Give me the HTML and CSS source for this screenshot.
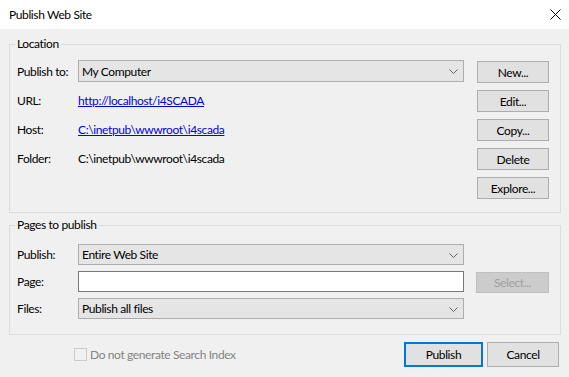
FILE: index.html
```html
<!DOCTYPE html>
<html>
<head>
<meta charset="utf-8">
<title>Publish Web Site</title>
<link rel="stylesheet" href="styles.css">
</head>
<body>
<div class="dialog">
  <div class="titlebar">
    <span class="title">Publish Web Site</span>
    <svg class="close" width="11" height="11" viewBox="0 0 11 11"><path d="M0.5 0.5 L10.5 10.5 M10.5 0.5 L0.5 10.5" stroke="#000" stroke-width="1" fill="none"/></svg>
  </div>
  <div class="content">
    <fieldset class="group group-location">
      <legend>Location</legend>
      <div class="loc">
        <div class="fields">
          <div class="row">
            <span class="label">Publish to:</span>
            <div class="combo"><span class="combo-text">My Computer</span><svg class="chev" width="9" height="5" viewBox="0 0 9 5"><path d="M0.5 0.5 L4.5 4.5 L8.5 0.5" stroke="#606060" fill="none"/></svg></div>
          </div>
          <div class="row">
            <span class="label">URL:</span>
            <a class="link" href="#">http://localhost/i4SCADA</a>
          </div>
          <div class="row">
            <span class="label">Host:</span>
            <a class="link" href="#">C:\inetpub\wwwroot\i4scada</a>
          </div>
          <div class="row">
            <span class="label">Folder:</span>
            <span class="value">C:\inetpub\wwwroot\i4scada</span>
          </div>
        </div>
        <div class="buttons">
          <button class="btn">New...</button>
          <button class="btn">Edit...</button>
          <button class="btn">Copy...</button>
          <button class="btn">Delete</button>
          <button class="btn">Explore...</button>
        </div>
      </div>
    </fieldset>
    <fieldset class="group group-pages">
      <legend>Pages to publish</legend>
      <div class="prow">
        <span class="label">Publish:</span>
        <div class="combo combo-sm"><span class="combo-text">Entire Web Site</span><svg class="chev" width="9" height="5" viewBox="0 0 9 5"><path d="M0.5 0.5 L4.5 4.5 L8.5 0.5" stroke="#606060" fill="none"/></svg></div>
      </div>
      <div class="prow">
        <span class="label">Page:</span>
        <div class="textbox"></div>
        <button class="btn btn-disabled" disabled>Select...</button>
      </div>
      <div class="prow">
        <span class="label">Files:</span>
        <div class="combo combo-sm"><span class="combo-text">Publish all files</span><svg class="chev" width="9" height="5" viewBox="0 0 9 5"><path d="M0.5 0.5 L4.5 4.5 L8.5 0.5" stroke="#606060" fill="none"/></svg></div>
      </div>
    </fieldset>
    <div class="footer">
      <label class="check"><span class="checkbox"></span><span class="check-text">Do not generate Search Index</span></label>
      <div class="actions">
        <button class="btn btn-default">Publish</button>
        <button class="btn btn-cancel">Cancel</button>
      </div>
    </div>
  </div>
</div>
</body>
</html>
```
FILE: styles.css
```css
html, body {
  margin: 0;
  padding: 0;
}
body {
  background: #f0f0f0;
  font-family: "Lato", "Noto Sans", sans-serif;
  font-size: 12px;
  letter-spacing: -0.38px;
  color: #000;
}
.dialog {
  width: 569px;
  height: 377px;
  display: flex;
  flex-direction: column;
  background: #f0f0f0;
}
.titlebar {
  height: 29px;
  background: #fff;
  display: flex;
  align-items: center;
  justify-content: space-between;
  padding: 0 8px 0 9px;
  box-sizing: border-box;
}
.title {
  line-height: 16px;
}
.close {
  display: block;
}
.content {
  padding: 7px 8px 0 9px;
}
.group {
  margin: 0;
  border: 1px solid #dcdcdc;
  min-inline-size: 0;
}
.group legend {
  padding: 0 2px;
  margin-left: -2px;
  line-height: 16px;
}
.group-location {
  padding: 8px 11px 13px 7px;
}
.group-pages {
  margin-top: 4px;
  padding: 11px 11px 15px 7px;
  display: flex;
  flex-direction: column;
  gap: 6px;
}
.loc {
  display: flex;
  gap: 13px;
}
.fields {
  display: flex;
  flex-direction: column;
  gap: 7px;
}
.row {
  display: flex;
  align-items: center;
  height: 22px;
}
.label {
  width: 61px;
  flex: none;
}
.combo {
  width: 386px;
  height: 22px;
  box-sizing: border-box;
  border: 1px solid #adadad;
  background: #e5e5e5;
  display: flex;
  align-items: center;
  justify-content: space-between;
  padding: 0 5px 0 3px;
}
.combo-sm {
  height: 21px;
}
.chev {
  display: block;
  margin-top: 1px;
}
.link {
  color: #0000e6;
  text-decoration: underline;
}
.buttons {
  padding-top: 1px;
  display: flex;
  flex-direction: column;
  gap: 7px;
}
.btn {
  font-family: inherit;
  font-size: inherit;
  letter-spacing: inherit;
  color: #000;
  background: #e1e1e1;
  border: 1px solid #adadad;
  border-radius: 0;
  width: 72px;
  height: 22px;
  padding: 0;
  margin: 0;
  box-sizing: border-box;
}
.prow {
  display: flex;
  align-items: center;
  height: 21px;
}
.textbox {
  width: 386px;
  height: 21px;
  box-sizing: border-box;
  background: #fff;
  border: 1px solid #7a7a7a;
}
.btn-disabled {
  margin-left: 12px;
  width: 73px;
  height: 21px;
  margin-top: 2px;
  background: #cccccc;
  border-color: #bfbfbf;
  color: #a0a0a0;
}
.footer {
  display: flex;
  align-items: center;
  padding: 7px 2px 0 65px;
}
.check {
  display: flex;
  align-items: center;
  gap: 3px;
  color: #838383;
}
.checkbox {
  width: 13px;
  height: 13px;
  box-sizing: border-box;
  border: 1px solid #cccccc;
  background: #f0f0f0;
}
.actions {
  margin-left: auto;
  display: flex;
  gap: 4px;
}
.btn-default {
  width: 79px;
  height: 25px;
  border: 2px solid #0078d7;
}
.btn-cancel {
  width: 72px;
  height: 25px;
}
```
